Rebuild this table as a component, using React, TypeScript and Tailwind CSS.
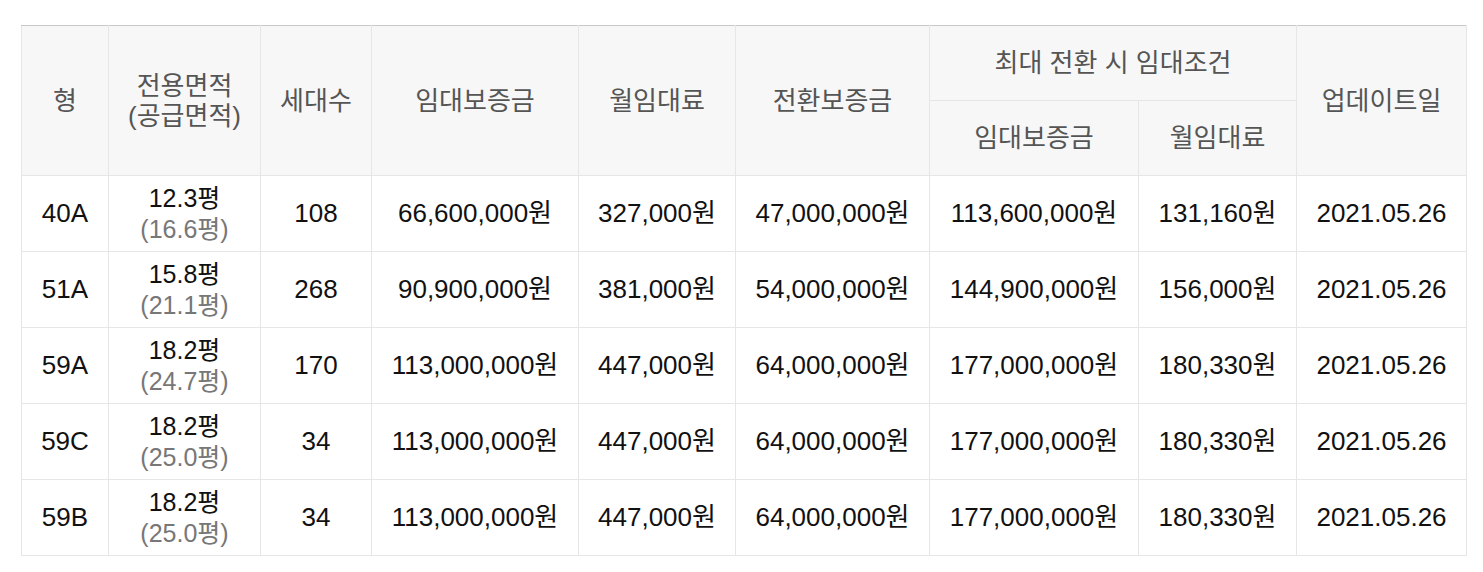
const rows = [
  { type: '40A', area: '12.3평', supply: '(16.6평)', units: '108', deposit: '66,600,000원', rent: '327,000원', conv: '47,000,000원', maxDeposit: '113,600,000원', maxRent: '131,160원', date: '2021.05.26' },
  { type: '51A', area: '15.8평', supply: '(21.1평)', units: '268', deposit: '90,900,000원', rent: '381,000원', conv: '54,000,000원', maxDeposit: '144,900,000원', maxRent: '156,000원', date: '2021.05.26' },
  { type: '59A', area: '18.2평', supply: '(24.7평)', units: '170', deposit: '113,000,000원', rent: '447,000원', conv: '64,000,000원', maxDeposit: '177,000,000원', maxRent: '180,330원', date: '2021.05.26' },
  { type: '59C', area: '18.2평', supply: '(25.0평)', units: '34', deposit: '113,000,000원', rent: '447,000원', conv: '64,000,000원', maxDeposit: '177,000,000원', maxRent: '180,330원', date: '2021.05.26' },
  { type: '59B', area: '18.2평', supply: '(25.0평)', units: '34', deposit: '113,000,000원', rent: '447,000원', conv: '64,000,000원', maxDeposit: '177,000,000원', maxRent: '180,330원', date: '2021.05.26' },
];

const th = 'border border-[#e6e6e6] bg-[#f7f7f7] font-normal text-[#555] text-[26px] leading-[30px] text-center align-middle';
const td = 'border border-[#e6e6e6] text-[#111] text-[26px] text-center align-middle';

export default function App() {
  return (
    <div className="bg-white w-[1483px] h-[572px] pt-[25px] pl-[21px]" style={{ fontFamily: '"Liberation Sans", "Noto Sans CJK KR", Arial, sans-serif' }}>
      <table className="w-[1445px] border-collapse table-fixed border-t border-t-[#c8c8c8]">
        <colgroup>
          <col className="w-[87px]" />
          <col className="w-[152px]" />
          <col className="w-[111px]" />
          <col className="w-[207px]" />
          <col className="w-[157px]" />
          <col className="w-[194px]" />
          <col className="w-[209px]" />
          <col className="w-[158px]" />
          <col className="w-[170px]" />
        </colgroup>
        <thead>
          <tr className="h-[75px]">
            <th rowSpan={2} className={`${th} border-t-[#c8c8c8]`}>형</th>
            <th rowSpan={2} className={`${th} border-t-[#c8c8c8]`}>
              전용면적
              <br />
              (공급면적)
            </th>
            <th rowSpan={2} className={`${th} border-t-[#c8c8c8]`}>세대수</th>
            <th rowSpan={2} className={`${th} border-t-[#c8c8c8]`}>임대보증금</th>
            <th rowSpan={2} className={`${th} border-t-[#c8c8c8]`}>월임대료</th>
            <th rowSpan={2} className={`${th} border-t-[#c8c8c8]`}>전환보증금</th>
            <th colSpan={2} className={`${th} border-t-[#c8c8c8]`}>최대 전환 시 임대조건</th>
            <th rowSpan={2} className={`${th} border-t-[#c8c8c8]`}>업데이트일</th>
          </tr>
          <tr className="h-[75px]">
            <th className={th}>임대보증금</th>
            <th className={th}>월임대료</th>
          </tr>
        </thead>
        <tbody>
          {rows.map((r) => (
            <tr key={r.type} className="h-[76px]">
              <td className={td}>{r.type}</td>
              <td className="border border-[#e6e6e6] text-center align-middle text-[25px] leading-[31px]">
                <div className="text-[#111]">{r.area}</div>
                <div className="text-[#777]">{r.supply}</div>
              </td>
              <td className={td}>{r.units}</td>
              <td className={td}>{r.deposit}</td>
              <td className={td}>{r.rent}</td>
              <td className={td}>{r.conv}</td>
              <td className={td}>{r.maxDeposit}</td>
              <td className={td}>{r.maxRent}</td>
              <td className={td}>{r.date}</td>
            </tr>
          ))}
        </tbody>
      </table>
    </div>
  );
}
